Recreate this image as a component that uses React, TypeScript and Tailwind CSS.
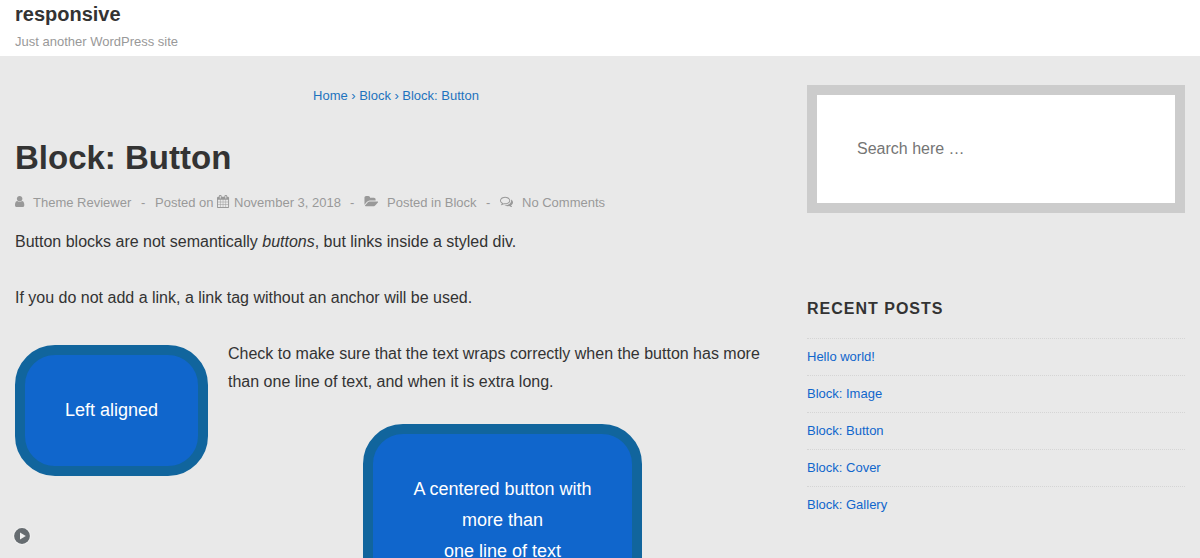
import type { ReactNode } from "react";

const icons = {
  user: {
    box: "0 0 1280 1792",
    d: "M1280 1399q0 109-62.5 187t-150.5 78h-854q-88 0-150.5-78t-62.5-187q0-85 8.5-160.5t31.5-152 58.5-131 94-89 134.5-34.5q131 128 313 128t313-128q76 0 134.5 34.5t94 89 58.5 131 31.5 152 8.5 160.5zm-256-887q0 159-112.5 271.5t-271.5 112.5-271.5-112.5-112.5-271.5 112.5-271.5 271.5-112.5 271.5 112.5 112.5 271.5z",
  },
  calendar: {
    box: "64 0 1664 1792",
    d: "M192 1664h288v-288h-288v288zm352 0h320v-288h-320v288zm-352-352h288v-320h-288v320zm352 0h320v-320h-320v320zm-352-384h288v-288h-288v288zm736 736h320v-288h-320v288zm-384-736h320v-288h-320v288zm768 736h288v-288h-288v288zm-384-352h320v-320h-320v320zm-352-864v-288q0-13-9.5-22.5t-22.5-9.5h-64q-13 0-22.5 9.5t-9.5 22.5v288q0 13 9.5 22.5t22.5 9.5h64q13 0 22.5-9.5t9.5-22.5zm736 864h288v-320h-288v320zm-384-384h320v-288h-320v288zm384 0h288v-288h-288v288zm32-480v-288q0-13-9.5-22.5t-22.5-9.5h-64q-13 0-22.5 9.5t-9.5 22.5v288q0 13 9.5 22.5t22.5 9.5h64q13 0 22.5-9.5t9.5-22.5zm384-64v1280q0 52-38 90t-90 38h-1408q-52 0-90-38t-38-90v-1280q0-52 38-90t90-38h128v-96q0-66 47-113t113-47h64q66 0 113 47t47 113v96h384v-96q0-66 47-113t113-47h64q66 0 113 47t47 113v96h128q52 0 90 38t38 90z",
  },
  folder: {
    box: "0 0 1920 1792",
    d: "M1943 952q0 31-31 66l-336 396q-43 51-120.5 86.5t-143.5 35.5h-1088q-34 0-60.5-13t-26.5-43q0-31 31-66l336-396q43-51 120.5-86.5t143.5-35.5h1088q34 0 60.5 13t26.5 43zm-343-344v160h-832q-94 0-197 47.5t-164 119.5l-337 396-5 6q0-4-.5-12.5t-.5-12.5v-960q0-92 66-158t158-66h320q92 0 158 66t66 158v32h544q92 0 158 66t66 158z",
  },
  comments: {
    box: "0 0 1792 1792",
    d: "M704 384q-153 0-286 52t-211.5 141-78.5 191q0 82 53 158t149 132l97 56-35 84q34-20 62-39l44-31 53 10q78 14 153 14 153 0 286-52t211.5-141 78.5-191-78.5-191-211.5-141-286-52zm0-128q191 0 353.5 68.5t256.5 186.5 94 257-94 257-256.5 186.5-353.5 68.5q-86 0-176-16-124 88-278 128-36 9-86 16h-3q-11 0-20.5-8t-11.5-21q-1-3-1-6.5t.5-6.5 2-6l2.5-5 3.5-5.5 4-5 4.5-5 4-4.5q5-6 23-25t26-29.5 22.5-29 25-38.5 20.5-44q-124-72-195-177t-71-224q0-139 94-257t256.5-186.5 353.5-68.5zm822 1169q10 24 20.5 44t25 38.5 22.5 29 26 29.5 23 25q1 1 4 4.5t4.5 5 4 5 3.5 5.5l2.5 5 2 6 .5 6.5-1 6.5q-3 14-13 22t-22 7q-50-7-86-16-154-40-278-128-90 16-176 16-271 0-472-132 58 4 88 4 161 0 309-45t264-129q125-92 192-212t67-254q0-77-23-152 129 71 204 178t75 230q0 120-71 224.5t-195 176.5z",
  },
};

function Icon({ name }: { name: keyof typeof icons }) {
  return (
    <svg viewBox={icons[name].box} className="mb-[2px] h-[13px] w-auto shrink-0 overflow-visible fill-current">
      <path d={icons[name].d} />
    </svg>
  );
}

function Meta({ icon, width, children }: { icon: keyof typeof icons; width: string; children: ReactNode }) {
  return (
    <span className={`flex items-center ${width}`}>
      <span className="flex w-[18px] shrink-0">
        <Icon name={icon} />
      </span>
      {children}
    </span>
  );
}

const posts = ["Hello world!", "Block: Image", "Block: Button", "Block: Cover", "Block: Gallery"];

export default function App() {
  return (
    <div className="relative h-[558px] overflow-hidden bg-[#e9e9e9] font-['Liberation_Sans',Arial,sans-serif] text-base leading-7 text-[#333]">
      <header className="h-14 bg-white px-[15px]">
        <div className="h-7 text-xl leading-7 font-bold">responsive</div>
        <div className="text-[13px] leading-7 text-[#999]">Just another WordPress site</div>
      </header>

      <div className="flex gap-[30px] px-[15px]">
        <main className="w-[762px] shrink-0">
          <nav className="mt-[29px] flex h-[21px] justify-center gap-[3.5px] text-[13px] leading-[21px] text-[#1e73be]">
            <a>Home</a>
            <span>›</span>
            <a>Block</a>
            <span>›</span>
            <a>Block: Button</a>
          </nav>
          <h1 className="mt-[31px] text-[33px] leading-[42px] font-bold">Block: Button</h1>
          <div className="mt-[13px] flex h-[21px] items-center text-[13px] leading-[21px] whitespace-nowrap text-[#999]">
            <Meta icon="user" width="w-[126px]">Theme Reviewer</Meta>
            <span className="w-[14px]">-</span>
            <span className="w-[62px]">Posted on</span>
            <span className="flex w-[17px]">
              <Icon name="calendar" />
            </span>
            <span className="w-[116px]">November 3, 2018</span>
            <span className="w-[14px]">-</span>
            <span className="flex w-[23px]">
              <Icon name="folder" />
            </span>
            <span className="w-[99px]">Posted in Block</span>
            <span className="w-[14px]">-</span>
            <span className="flex w-[22px]">
              <Icon name="comments" />
            </span>
            <span>No Comments</span>
          </div>
          <p className="mt-[15px]">
            Button blocks are not semantically <em>buttons</em>, but links inside a styled div.
          </p>
          <p className="mt-7">If you do not add a link, a link tag without an anchor will be used.</p>
          <div className="mt-7 flex items-start gap-5">
            <a className="mt-[5px] flex h-[131px] w-[193px] shrink-0 justify-center rounded-[40px] border-10 border-[#11659d] bg-[#1066cc] pt-10 text-lg leading-[31px] text-white">
              Left aligned
            </a>
            <p>
              Check to make sure that the text wraps correctly when the button has more
              <br />
              than one line of text, and when it is extra long.
            </p>
          </div>
          <div className="-mt-[52px] ml-[348px] flex">
            <a className="w-[279px] rounded-[40px] border-10 border-[#11659d] bg-[#1066cc] py-10 text-center text-lg leading-[31px] text-white">
              A centered button with
              <br />
              more than
              <br />
              one line of text
            </a>
          </div>
        </main>

        <aside className="w-[378px] shrink-0 pt-[29px]">
          <input
            type="search"
            placeholder="Search here …"
            className="block h-32 w-full border-10 border-[#ccc] bg-white px-10 placeholder:text-[#757575]"
          />
          <h2 className="mt-[82px] leading-7 font-bold tracking-[1px]">RECENT POSTS</h2>
          <ul className="mt-[15px] text-[13px]">
            {posts.map((post) => (
              <li key={post} className="h-[37px] border-t border-dotted border-[#d5d5d5] leading-[36px] text-[#1066cc]">
                {post}
              </li>
            ))}
          </ul>
        </aside>
      </div>

      <svg viewBox="0 0 18 18" className="absolute top-[527px] left-[13px] size-[18px]">
        <circle cx="9" cy="9" r="8.8" fill="#f3f3f3" />
        <circle cx="9" cy="9" r="7.9" fill="#666c70" />
        <path d="M7 5.5v7l5.8-3.5z" fill="#f1f1f1" />
      </svg>
    </div>
  );
}
